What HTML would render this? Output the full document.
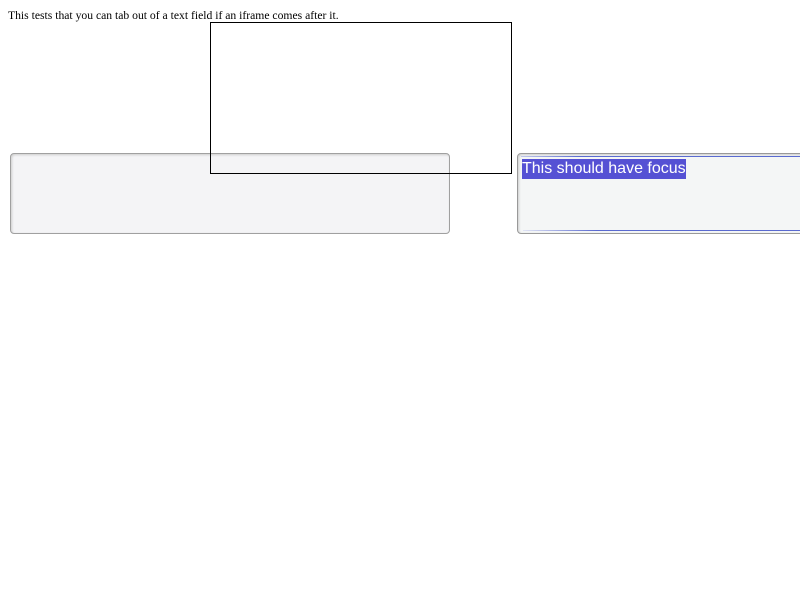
<!DOCTYPE html>
<html><head><style>
body{margin:0;background:#fff;position:relative;width:800px;height:600px;overflow:hidden}
.t{position:absolute;left:8px;top:9px;font:11.65px "Liberation Serif",serif;color:#000}
.ta{position:absolute;top:153px;height:79px;border:1px solid #a0a0a0;border-radius:4px;background:#f4f4f6;box-shadow:inset 1px 1px 2px #ccc}
.if{position:absolute;left:210px;top:22px;width:300px;height:150px;border:1px solid #000}
.r{background:#f4f6f6;border-color:#999}
.r:before{content:"";position:absolute;left:3px;right:0;top:2px;height:1px;background:linear-gradient(90deg,#c0c6ea,#5a6ad0 20%)}
.r:after{content:"";position:absolute;left:5px;right:0;bottom:2px;height:1px;background:linear-gradient(90deg,#e0e4f4,#5a6ad0 25%)}
.sel{position:absolute;left:4px;top:5px;background:#5551d4;color:#fff;font:16px "Liberation Sans",sans-serif;line-height:20px}
</style></head><body>
<div class="t">This tests that you can tab out of a text field if an iframe comes after it.</div>
<div class="ta" style="left:10px;width:438px"></div>
<div class="if"></div>
<div class="ta r" style="left:517px;width:300px"><span class="sel">This should have focus</span></div>
</body></html>
